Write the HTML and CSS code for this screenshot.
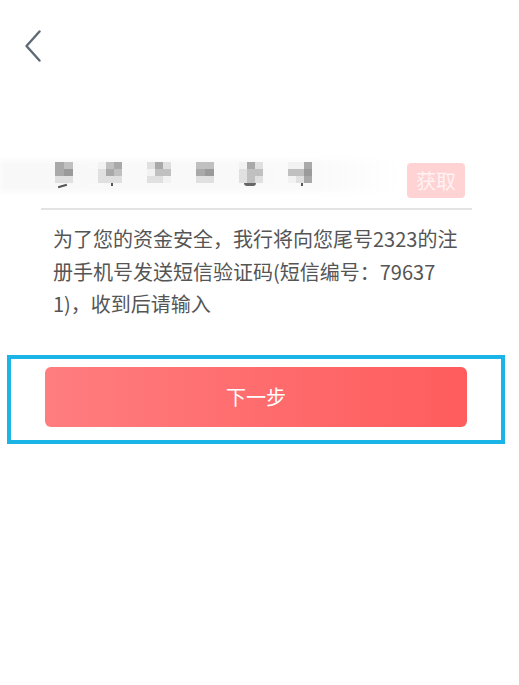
FILE: index.html
```html
<!DOCTYPE html>
<html lang="zh-CN">
<head>
    <meta charset="UTF-8">
    <meta name="viewport" content="width=device-width, initial-scale=1.0">
    <title>短信验证</title>
    <link rel="stylesheet" href="styles.css">
</head>

<body>
    <div class="page">
        <div class="top">
            <a href="javascript:;" class="back">
                <svg width="18" height="34" viewBox="0 0 18 34">
                    <polyline points="15.5,1.5 2.5,16 15.5,30.5" fill="none" stroke="#5f6a76" stroke-width="2.4" stroke-linecap="round" stroke-linejoin="round"/>
                </svg>
            </a>
        </div>

        <div class="field">
            <div class="mask">
                <div class="glyph two">
                    <i class="c3"></i><i class="c2"></i>
                    <i class="c3"></i><i class="c4"></i>
                    <i class="c1"></i><i class="c1"></i>
                    <b class="tail"></b>
                </div>
                <div class="glyph">
                    <i class="c0"></i><i class="c2"></i><i class="c3"></i>
                    <i class="c1"></i><i class="c3"></i><i class="c2"></i>
                    <i class="c1"></i><i class="c1"></i><i class="c1"></i>
                    <b class="dot"></b>
                </div>
                <div class="glyph">
                    <i class="c1"></i><i class="c3"></i><i class="c1"></i>
                    <i class="c0"></i><i class="c2"></i><i class="c2"></i>
                    <i class="c1"></i><i class="c1"></i><i class="c0"></i>
                </div>
                <div class="glyph two">
                    <i class="c2"></i><i class="c2"></i>
                    <i class="c3"></i><i class="c4"></i>
                    <i class="c1"></i><i class="c1"></i>
                </div>
                <div class="glyph">
                    <i class="c0"></i><i class="c3"></i><i class="c1"></i>
                    <i class="c1"></i><i class="c2"></i><i class="c2"></i>
                    <i class="c1"></i><i class="c2"></i><i class="c1"></i>
                    <b class="curve"></b>
                </div>
                <div class="glyph">
                    <i class="c0"></i><i class="c0"></i><i class="c3"></i>
                    <i class="c2"></i><i class="c2"></i><i class="c4"></i>
                    <i class="c0"></i><i class="c1"></i><i class="c3"></i>
                    <b class="dot"></b>
                </div>
            </div>
            <a href="javascript:;" class="get">获取</a>
        </div>

        <p class="tip">为了您的资金安全，我行将向您尾号2323的注<br>册手机号发送短信验证码(短信编号：79637<br>1)，收到后请输入</p>

        <div class="action">
            <a href="javascript:;" class="next">下一步</a>
        </div>
    </div>
</body>

</html>
```

FILE: styles.css
```css
* {
    margin: 0;
    padding: 0;
}

body {
    background-color: #fff;
    font-family: "Noto Sans CJK SC", "Noto Sans", sans-serif;
}

a {
    text-decoration: none;
}

.page {
    width: 519px;
}

.top {
    height: 150px;
    padding: 30px 0 0 24px;
    box-sizing: border-box;
}

.back {
    display: block;
    width: 18px;
    height: 34px;
}

.back svg {
    display: block;
}

/* 手机号一行 */
.field {
    position: relative;
    display: flex;
    align-items: flex-end;
    justify-content: space-between;
    height: 60px;
    margin: 0 47px 0 41px;
    padding-bottom: 10px;
    box-sizing: border-box;
    border-bottom: 2px solid #e3e3e3;
}

/* 打码后留下的淡灰底 */
.field::before {
    content: "";
    position: absolute;
    left: -41px;
    top: 10px;
    width: 400px;
    height: 32px;
    background: linear-gradient(to right, #f8f8f8, #fafafa 80%, rgba(255, 255, 255, 0));
    filter: blur(3px);
}

.mask {
    position: relative;
    display: flex;
    gap: 25px;
    align-self: flex-start;
    margin: 12px 0 0 14px;
    filter: blur(0.7px);
}

.glyph {
    position: relative;
    display: grid;
    grid-template-columns: 8px 8px 8px;
    grid-auto-rows: 7px;
}

.glyph.two {
    grid-template-columns: 9px 9px;
}

.glyph i {
    display: block;
}

.c0 { background-color: #f2f2f2; }
.c1 { background-color: #e0e0e0; }
.c2 { background-color: #c0c0c0; }
.c3 { background-color: #a9a9a9; }
.c4 { background-color: #9a9a9a; }

/* 字形残留的小笔画 */
.glyph b {
    position: absolute;
    background-color: #555;
}

.glyph .tail {
    left: 3px;
    bottom: -4px;
    width: 9px;
    height: 2px;
    transform: rotate(-15deg);
}

.glyph .dot {
    left: 13px;
    bottom: -3px;
    width: 2px;
    height: 3px;
}

.glyph .curve {
    left: 5px;
    bottom: -3px;
    width: 12px;
    height: 3px;
    border-radius: 0 0 6px 6px;
    background-color: #666;
}

.get {
    position: relative;
    width: 58px;
    height: 35px;
    line-height: 35px;
    margin-right: 7px;
    text-align: center;
    font-size: 20px;
    color: #fff3f3;
    background-color: #ffd2d3;
    border-radius: 4px;
}

.tip {
    margin: 13px 40px 0 53px;
    font-size: 20px;
    line-height: 32.5px;
    color: #555;
    white-space: nowrap;
}

/* 下一步外框 */
.action {
    margin: 34px 14px 0 7px;
    padding: 8px 34px 13px;
    border: 4px solid #1bb4e6;
}

.next {
    display: block;
    height: 60px;
    line-height: 60px;
    text-align: center;
    font-size: 20px;
    color: #fff;
    border-radius: 6px;
    background: linear-gradient(to right, #ff7d7f, #ff5c5d);
}
```
